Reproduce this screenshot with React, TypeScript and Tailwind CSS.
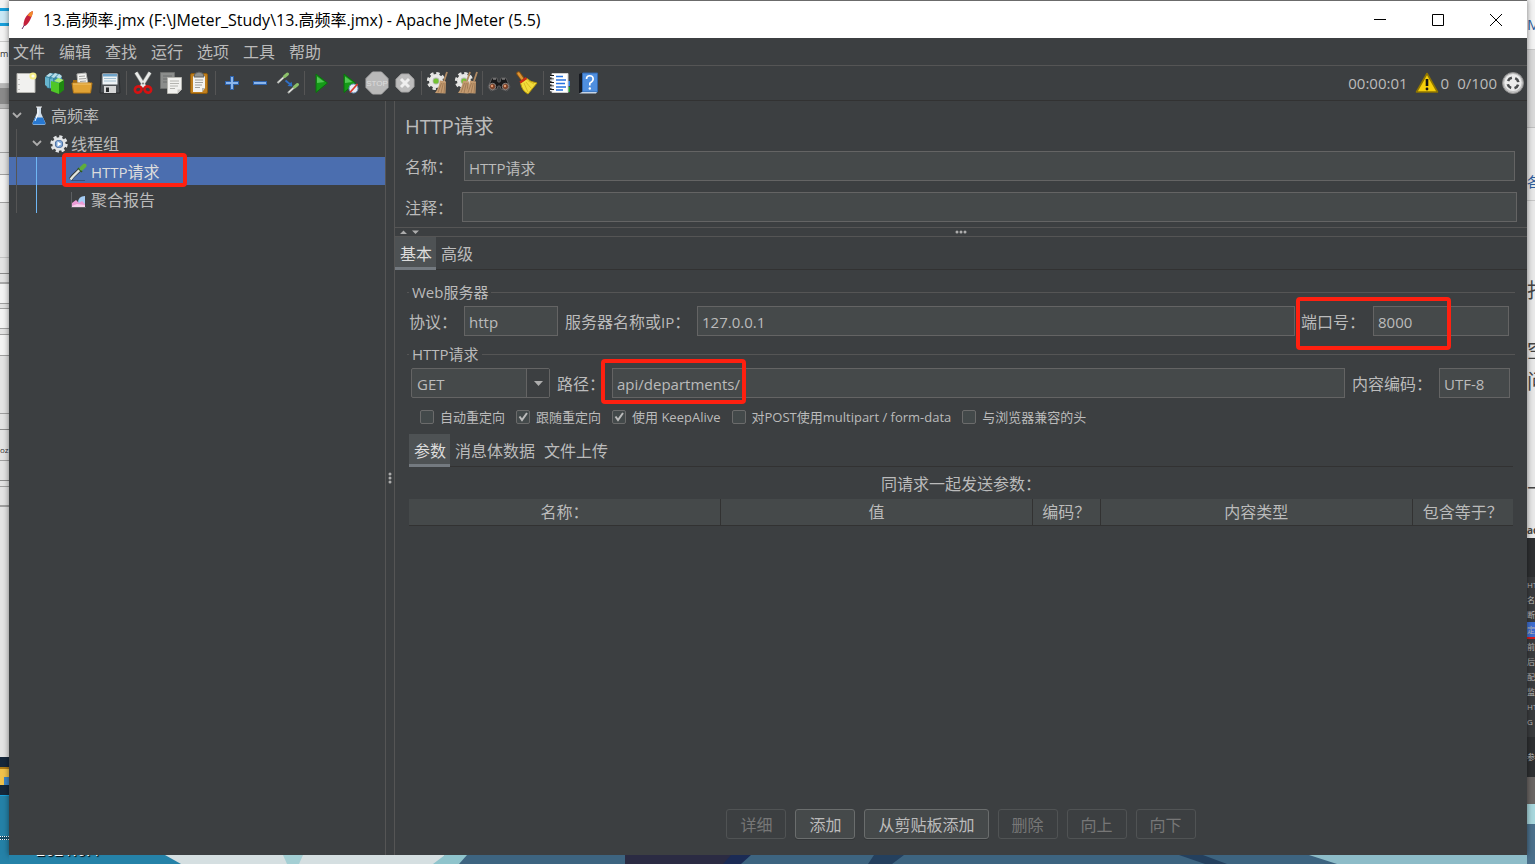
import { useState } from "react";
import type { ReactNode } from "react";

const FIELD =
  "h-[30px] min-w-0 border border-[#646464] bg-[#45494a] px-1 pt-0.5 text-[15px] text-[#bbbbbb] focus:border-[#466d94] focus:outline-none";

const MENUS = ["文件", "编辑", "查找", "运行", "选项", "工具", "帮助"];

/* ---------- toolbar icons, all on a 24x24 grid ---------- */

function Icon({ children, className = "size-6" }: { children: ReactNode; className?: string }) {
  return (
    <svg viewBox="0 0 24 24" className={`${className} shrink-0`} fill="none" aria-hidden="true">
      {children}
    </svg>
  );
}

const Gear = () => (
  <g>
    <circle cx="10" cy="10" r="7.8" stroke="#e4e4e2" strokeWidth="2.6" strokeDasharray="3.4 2.726" />
    <circle cx="10" cy="10" r="7" fill="#e8e8e6" />
    <circle cx="10" cy="10" r="3.4" fill="#b5b8b2" />
    <circle cx="10" cy="10" r="2.6" fill="#73c332" />
  </g>
);

const Brush = ({ x = 0 }: { x?: number }) => (
  <g transform={`translate(${x} 0)`}>
    <path d="M21 1 18 10" stroke="#b08a62" strokeWidth="1.8" />
    <path d="M14 9.5 20 10.5 19.5 22.5 9 22Q13 17 14 9.5Z" fill="#c39a70" />
    <path d="M15.5 12 12 21.5M17.3 12 15 22M19 12 18 22" stroke="#94704a" strokeWidth=".7" />
  </g>
);

const NewIcon = () => (
  <Icon>
    <path d="M3 2.5h18v19H3z" fill="#f1f1ef" stroke="#b5b5b0" />
    <path d="M5 8v1M5 13v1M5 18v1" stroke="#999" />
    <circle cx="19" cy="5" r="3.6" fill="#f7ee86" />
    <circle cx="19" cy="5" r="1.6" fill="#fffef0" />
  </Icon>
);

const TemplatesIcon = () => (
  <Icon>
    <path d="M3 6 8 2l10 1 2 4v5l-8 6-7-1z" fill="#3b89a6" />
    <path d="M4 5 8 2l3 1-4 3zM9 6l4-4 3 1-4 4zM14 6l3-3 3 2-2 3z" fill="#b9dde8" />
    <path d="M3 6 7 7v10l-4-3zM8 8l3-1v9l-3 1z" fill="#67b4cd" />
    <path d="M12 10 16 7l6 2-4 3z" fill="#a9ec72" />
    <path d="M9 10 17 12v11l-8-3z" fill="#4fc727" />
    <path d="M17 12 22 9v10l-5 4z" fill="#1f8a10" />
  </Icon>
);

const OpenIcon = () => (
  <Icon>
    <path d="M3 9h5l2 2h10v9H3z" fill="#a56c12" />
    <path d="M7 3 16 2l2 11-10 1z" fill="#f4f4f2" stroke="#b7b7b4" />
    <path d="M9 5.5 15 5M9 8l7-.5M10 10.5l6-.5" stroke="#a0a09c" />
    <path d="M2 12h20l-1.5 10h-17z" fill="#e1a335" stroke="#b87b18" />
    <path d="M3 13h18" stroke="#f3c66d" />
  </Icon>
);

const SaveIcon = () => (
  <Icon>
    <path d="M3 2h18l1 20H2z" fill="#4c5054" stroke="#292b2d" />
    <path d="M4.5 2.5h15v11h-15z" fill="#eef3f6" />
    <path d="M5 3h14v2.5H5z" fill="#6fa4ca" />
    <path d="M6 7.5h12M6 10h12" stroke="#a2bfd1" />
    <path d="M6 15h12v7H6z" fill="#d5d6d7" />
    <path d="M8 16.5h3V21H8z" fill="#292b2d" />
  </Icon>
);

const CutIcon = () => (
  <Icon>
    <path d="M5 1.5 14 16M19 1.5 10 16" stroke="#8f9290" strokeWidth="4" />
    <path d="M5 1.5 14 16M19 1.5 10 16" stroke="#e9ebe9" strokeWidth="2.6" />
    <circle cx="12" cy="12.5" r="1" fill="#777" />
    <ellipse cx="7.2" cy="18.5" rx="3.4" ry="3" transform="rotate(-25 7.2 18.5)" stroke="#d51212" strokeWidth="2.6" />
    <ellipse cx="16.8" cy="18.5" rx="3.4" ry="3" transform="rotate(25 16.8 18.5)" stroke="#d51212" strokeWidth="2.6" />
  </Icon>
);

const CopyIcon = () => (
  <Icon>
    <path d="M1.5 1.5h14v16h-14z" fill="#8b8d8c" stroke="#6d6f6e" />
    <path d="M4 5h9M4 8h9M4 11h6" stroke="#6d6f6e" />
    <path d="M8.5 6.5h14v12l-4 4h-10z" fill="#f1f1ef" stroke="#b5b5b0" />
    <path d="M11 10h9M11 12.5h9M11 15h8M11 17.5h5" stroke="#b4b4b0" />
    <path d="m18.5 22.5v-4h4z" fill="#c9c9c5" />
  </Icon>
);

const PasteIcon = () => (
  <Icon>
    <rect x="3.5" y="2.5" width="17" height="20" rx="1.5" fill="#c07f1d" stroke="#8d5a0c" />
    <path d="M6 5h12v12l-3 4H6z" fill="#f2f2f0" />
    <path d="M8 2.5Q12-.5 16 2.5L17 6H7z" fill="#8f918f" stroke="#5e605f" />
    <path d="M8 9h8M8 11.5h8M8 14h7M8 16.5h5" stroke="#a0a09c" />
    <path d="m15 21v-4h3z" fill="#b8b8b3" />
  </Icon>
);

const PlusIcon = () => (
  <Icon>
    <path d="M12 5v14M5 12h14" stroke="#2d62ab" strokeWidth="4" />
    <path d="M12 6v12M6 12h12" stroke="#8bb6ec" strokeWidth="2" />
  </Icon>
);

const MinusIcon = () => (
  <Icon>
    <path d="M5 12h14" stroke="#2d62ab" strokeWidth="4" />
    <path d="M6 12h12" stroke="#8bb6ec" strokeWidth="2" />
  </Icon>
);

const ToggleIcon = () => (
  <Icon>
    <path d="M1.5 12 8 6M12 22 18 16.500" stroke="#b4b7b3" strokeWidth="2.2" />
    <path d="M2.5 11 7.500 6.500M13 21l4.500-4" stroke="#f0f2ee" />
    <path d="M8.500 5.500 11.500 3M18.500 16l3-2.500" stroke="#8cc069" strokeWidth="3" strokeLinecap="round" />
    <path d="M9.5 9.5 15 14" stroke="#2f6fc6" strokeWidth="1.8" />
    <path d="m16.5 15.5-5-.6 4-4.2z" fill="#2f6fc6" />
  </Icon>
);

const StartIcon = ({ noTimers = false }: { noTimers?: boolean }) => (
  <Icon>
    <path d="M7 3 18.5 12 7 21.5z" fill="#159a18" stroke="#0b700d" />
    <path d="M8 5.5 15.5 11 8 12z" fill="#52c653" />
    {noTimers && (
      <>
        <circle cx="16.5" cy="17.5" r="4.5" fill="#e8eef5" stroke="#6d94bd" />
        <path d="M13 21.5 20.5 13" stroke="#d83b2d" strokeWidth="1.8" />
      </>
    )}
  </Icon>
);

const StopIcon = () => (
  <Icon>
    <path d="M7.5 1h9L23 7.5v9L16.5 23h-9L1 16.500v-9z" fill="#b9b9b9" stroke="#b0b0b0" />
    <text x="12" y="15" textAnchor="middle" fontSize="8" fontFamily="Liberation Sans, sans-serif" fill="#dddddd">
      STOP
    </text>
  </Icon>
);

const ShutdownIcon = () => (
  <Icon>
    <path d="M8.3 3h7.4L21 8.3v7.4L15.7 21H8.3L3 15.7V8.3z" fill="#bdbdbd" stroke="#a8a8a8" />
    <path d="m8 8 8 8M16 8l-8 8" stroke="#efefef" strokeWidth="3" />
  </Icon>
);

const ClearIcon = () => (
  <Icon>
    <Gear />
    <Brush />
  </Icon>
);

const ClearAllIcon = () => (
  <Icon>
    <Gear />
    <Brush x={-5} />
    <Brush x={2} />
  </Icon>
);

const SearchIcon = () => (
  <Icon>
    <path d="M5 7h5l1 4h2l1-4h5l4 9-3 4-6-2-1-3h-2l-1 3-6 2-3-4z" fill="#19191a" stroke="#5c5c5d" />
    <path d="M6 8h3M15 8h3" stroke="#aaa" />
    <circle cx="5.5" cy="15.5" r="3.2" fill="#7a4027" stroke="#888" />
    <circle cx="18.5" cy="15.5" r="3.2" fill="#7a4027" stroke="#888" />
    <circle cx="5" cy="15" r="1.2" fill="#e29a70" />
    <circle cx="18" cy="15" r="1.2" fill="#e29a70" />
  </Icon>
);

const BroomIcon = () => (
  <Icon>
    <path d="M3.5 2.5 8 8.5" stroke="#8d520f" strokeWidth="4.4" strokeLinecap="round" />
    <path d="M3.5 2.5 7 7.5" stroke="#dc9637" strokeWidth="2.4" strokeLinecap="round" />
    <path d="M5.5 12 12 7.5Q15 11 22 12L13 23Q7 20 5.5 12z" fill="#f3dc3c" stroke="#b79708" />
    <path d="M5 11.5 11.5 7" stroke="#cc2b14" strokeWidth="2.2" />
    <path d="M9 12Q11 17 13 21M11 11Q14 15 16.5 17.5M12.5 9.5 19 13" stroke="#d9bd22" />
  </Icon>
);

const FunctionIcon = () => (
  <Icon>
    <path d="M18 10h4v5h-4z" fill="#2e7fe2" />
    <path d="M18 16h4v5h-4z" fill="#1d9a2b" />
    <path d="M4 2.500h16v19H4z" fill="#fff" stroke="#d0d0d0" />
    <path d="M8 5.500h7M8 9h10M8 12.500h9M8 16h10M8 19h7" stroke="#2672df" strokeWidth="1.3" />
    <path d="M2 4.500h4M2 8h4M2 11.500h4M2 15h4M2 18.500h4" stroke="#151515" strokeWidth="1.2" />
    <path d="M2 5.700h4M2 9.200h4M2 12.700h4M2 16.200h4M2 19.700h4" stroke="#eee" strokeWidth="1.2" />
  </Icon>
);

const HelpIcon = () => (
  <Icon>
    <path d="M3 3 7 1.500v20L3 22.500z" fill="#171a20" />
    <path d="M6.500 2h15v19h-15z" fill="#4f8fdf" stroke="#3367ab" />
    <path d="M3 22.500 6 21h15l-1 1.500z" fill="#c7d5e6" />
    <path d="M10.500 8Q10.500 4.800 13.800 4.800T17.200 8Q17.200 10.300 13.800 12.200V14.500" stroke="#fff" strokeWidth="1.6" />
    <circle cx="13.800" cy="17.500" r="1.200" fill="#fff" />
  </Icon>
);

const WarningIcon = () => (
  <Icon>
    <path d="M12 2.5 22.5 21h-21z" fill="#f6cf0a" stroke="#8f7500" strokeWidth="1.6" strokeLinejoin="round" />
    <path d="M12 8v7" stroke="#141414" strokeWidth="2.6" />
    <circle cx="12" cy="18" r="1.4" fill="#141414" />
  </Icon>
);

const RemoteIcon = () => (
  <Icon>
    <circle cx="12" cy="12" r="10.5" fill="#c2c2c2" stroke="#8d8d8d" />
    <circle cx="12" cy="11.5" r="8.6" fill="#ececec" />
    <circle cx="12" cy="12" r="5.400" stroke="#4a4c4e" strokeWidth="2.600" strokeDasharray="5 3.480" strokeDashoffset="-1.700" />
  </Icon>
);

/* ---------- tree icons ---------- */

const FlaskIcon = () => (
  <svg viewBox="0 0 16 20" className="h-5 w-4 shrink-0" aria-hidden="true">
    <path d="M6 1h4v6l4.5 10q.3 2-1.5 2H3q-1.800 0-1.500-2L6 7z" fill="#cfdce8" />
    <path d="M4 11.500h8l2.300 5.500q.2 1.500-1.300 1.500H3q-1.500 0-1.300-1.500z" fill="#2878d0" />
    <path d="M5 1h6" stroke="#eee" />
    <path d="M7 3v5l-3 7" stroke="#fff" fill="none" />
  </svg>
);

const ThreadGroupIcon = () => (
  <svg viewBox="0 0 18 18" className="size-[18px] shrink-0" fill="none" aria-hidden="true">
    <circle cx="9" cy="9" r="7.400" stroke="#e3e5e7" strokeWidth="2.600" strokeDasharray="3.200 2.612" />
    <circle cx="9" cy="9" r="5.400" fill="#3b5f94" stroke="#e3e5e7" strokeWidth="2.600" />
    <circle cx="9" cy="9" r="3.400" fill="#7fa6d6" />
    <path d="M7.500 6.500 11.500 9l-4 2.500z" fill="#fff" />
  </svg>
);

const SamplerIcon = () => (
  <svg viewBox="0 0 18 18" className="size-[18px] shrink-0" fill="none" aria-hidden="true">
    <path d="M2 17.500h14" stroke="#37517f" />
    <path d="M1.500 16.500 4 13 11 6.500" stroke="#33373a" strokeWidth="3.800" />
    <path d="M1.500 16.500 4 13.500 11 6.500" stroke="#e2e6df" strokeWidth="2.400" />
    <path d="m9 5 4 4" stroke="#315d1a" strokeWidth="1.600" />
    <path d="M12.500 5.500 15.500 2.500" stroke="#5fae3a" strokeWidth="4" strokeLinecap="round" />
  </svg>
);

const ReportIcon = () => (
  <svg viewBox="0 0 18 18" className="size-[18px] shrink-0" fill="none" aria-hidden="true">
    <path d="M2.500 1v15.500H17" stroke="#5d6062" />
    <path d="M9 12q0-7 7-7v8l-7 2z" fill="#a6cdf5" />
    <path d="M3 16v-4l4-3 3 3 3-2 3 3v3z" fill="#eb9bd6" />
    <path d="M3 16v-1l5-2 8 1v2z" fill="#f6d0ec" />
  </svg>
);

const Chevron = () => (
  <svg viewBox="0 0 12 12" className="size-3 shrink-0" fill="none" aria-hidden="true">
    <path d="m2 4 4 4 4-4" stroke="#adadad" strokeWidth="1.800" />
  </svg>
);

/* ---------- small pieces ---------- */

function Tool({ label, children }: { label: string; children: ReactNode }) {
  return (
    <button type="button" aria-label={label} className="flex w-7 items-center justify-center">
      {children}
    </button>
  );
}

const Sep = () => (
  <div className="flex w-[5px] justify-center">
    <div className="h-6 w-px bg-[#555555]" />
  </div>
);

const RedBox = ({ className }: { className: string }) => (
  <div className={`pointer-events-none absolute rounded border-4 border-[#ff2010] ${className}`} />
);

function Tabs({ items }: { items: string[] }) {
  const [active, setActive] = useState(items[0]);
  return (
    <div role="tablist" className="flex h-[33px] border-b border-[#323232]">
      {items.map((t) => (
        <button
          key={t}
          type="button"
          role="tab"
          aria-selected={t === active}
          onClick={() => setActive(t)}
          className={`h-[33px] border-b-3 pl-[5px] pr-1 pt-1 text-base ${
            t === active ? "border-[#747a80] bg-[#4e5254] text-[#dddddd]" : "border-transparent"
          }`}
        >
          {t}
        </button>
      ))}
    </div>
  );
}

function Check({ label, checked = false }: { label: string; checked?: boolean }) {
  return (
    <label className="flex items-center gap-1.5">
      <span className="relative flex size-3.5">
        <input
          type="checkbox"
          defaultChecked={checked}
          className="peer size-3.5 appearance-none rounded-[2px] border border-[#6b6b6b] bg-[#43494a]"
        />
        <svg
          viewBox="0 0 14 14"
          fill="none"
          aria-hidden="true"
          className="pointer-events-none absolute inset-0 hidden size-3.5 peer-checked:block"
        >
          <path d="m3.500 6.500 2.500 3.500L11 3" stroke="#bbbbbb" strokeWidth="2" />
        </svg>
      </span>
      {label}
    </label>
  );
}

function ActionButton({ children, disabled = false }: { children: ReactNode; disabled?: boolean }) {
  return (
    <button
      type="button"
      disabled={disabled}
      className="h-[30px] rounded-[3px] border border-[#6a6d6d] bg-[#45494a] px-[13px] pt-0.5 text-base shadow-[0_1px_0_#333638] disabled:border-[#505354] disabled:bg-transparent disabled:text-[#777777] disabled:shadow-none"
    >
      {children}
    </button>
  );
}

/* ---------- what shows of the desktop around the window ---------- */

function LeftEdge() {
  return (
    <div className="flex w-[9px] shrink-0 flex-col overflow-hidden bg-[#e4e4e4] text-[9px] leading-4 text-[#333333]" aria-hidden="true">
      <div className="h-2 bg-[#f4f4f4]" />
      <div className="h-[18px] border-y-3 border-[#18a0dc] bg-[#c9e9f6]" />
      <div className="h-4 border-b border-[#c8c8c8] bg-[#f4f4f4]" />
      <div className="h-[42px] border-b border-[#c0c0c0] bg-[#f4f4f4] pt-1">m</div>
      <div className="h-6 border-y-4 border-[#b8b8b8] bg-[#8b8b8b]" />
      <div className="h-[45px] border-y border-[#a0a0a0]" />
      <div className="h-[22px] border-b border-[#a0a0a0]" />
      <div className="h-[28px] border-b border-[#a0a0a0] bg-[#f4f4f4]" />
      <div className="h-[55px] border-b border-[#c4c4c4]" />
      <div className="h-4 border-b border-[#8c8c8c]" />
      <div className="h-[10px] border-b-2 border-[#aaaaaa]" />
      <div className="h-5 border-b border-[#a0a0a0] bg-[#f4f4f4]" />
      <div className="h-[5px] border-b border-[#a0a0a0]" />
      <div className="h-5 border-b border-[#a0a0a0] bg-[#f4f4f4]" />
      <div className="h-[6px] border-b border-[#a0a0a0]" />
      <div className="h-[21px] border-b border-[#a0a0a0] bg-[#f4f4f4]" />
      <div className="h-[58px] border-b border-[#a0a0a0]" />
      <div className="h-4 border-b border-[#8c8c8c]" />
      <div className="h-[31px] border-b border-[#a0a0a0] pt-3 text-[8px]">oz</div>
      <div className="h-5 border-b border-[#8c8c8c]" />
      <div className="h-[6px] border-b border-[#a0a0a0]" />
      <div className="h-5 border-b-2 border-[#a0a0a0]" />
      <div className="flex-1" />
      <div className="h-[10px] bg-[#17283b]" />
      <div className="flex h-[18px] items-end justify-end border-t-2 border-[#b07c15] bg-[#f2c34c]">
        <div className="h-2 w-[5px] bg-[#3d84c4]" />
      </div>
      <div className="h-[11px] border-b border-[#18a0dc] bg-[#17283b]" />
      <div className="h-10 bg-[#2582a8]" />
      <div className="h-1 border-y border-dotted border-white bg-[#17506b]" />
      <div className="h-6 bg-[#2582a8]" />
    </div>
  );
}

function RightEdge() {
  return (
    <div className="flex w-2 shrink-0 flex-col overflow-hidden whitespace-nowrap bg-[#e9e9e9] text-[20px] leading-6 text-[#444444]" aria-hidden="true">
      <div className="h-[50px] border-b border-[#c8c8c8] bg-[#f4f4f4] pt-3 text-[15px] text-[#2f5f9e]">M</div>
      <div className="h-[78px] border-b border-[#c0c0c0] bg-[#dadada]" />
      <div className="h-[73px] border-b border-[#c8c8c8] pt-[42px] text-[14px] text-[#2f5f9e]">各</div>
      <div className="h-[78px]" />
      <div className="h-[60px]">打</div>
      <div className="h-[31px]">空</div>
      <div className="h-[114px]">问</div>
      <div className="h-[34px]">下</div>
      <div className="h-5 text-[10px] font-bold">ac</div>
      <div className="h-[39px] bg-[#2e3032]" />
      <div className="flex h-[160px] flex-col bg-[#3a3c3e] text-[8px] leading-[15px] text-[#bbbbbb]">
        <span>HT</span>
        <span>名</span>
        <span>断</span>
        <span className="border-b-2 border-[#d81e1e] bg-[#3f6fd0]">定</span>
        <span>前</span>
        <span>后</span>
        <span>配</span>
        <span>监</span>
        <span>HT</span>
        <span>G</span>
      </div>
      <div className="h-10 bg-[#2e3032] pt-3 text-[8px] leading-[15px] text-[#bbbbbb]">参</div>
      <div className="h-[27px] bg-[#6b6664]" />
      <div className="h-5 bg-[#a9d8de]" />
      <div className="flex-1 bg-[#4b708c]" />
    </div>
  );
}

function BottomEdge() {
  return (
    <div className="relative h-[9px] shrink-0 overflow-hidden bg-[#3d6480]" aria-hidden="true">
      <svg viewBox="0 0 1518 9" preserveAspectRatio="none" className="h-full w-full">
        <path d="M0 0h160l14 9H0z" fill="#2582a8" />
        <path d="M156 0h280l-6 9H172z" fill="#d5dfe1" />
        <path d="M274 0h20l-4 9h-12z" fill="#a4cfd4" />
        <path d="M436 0h22l-8 9h-26z" fill="#8fc4cc" />
        <path d="M616 0h120l-14 9H616z" fill="#2b2b43" />
        <path d="M722 0h20l-10 9h-18z" fill="#1b2b55" />
        <path d="M865 0h30l-12 9h-24zM1170 0h24l24 9h-22z" fill="#24405e" />
        <path d="M1300 0h218v9h-190z" fill="#8dbcc8" />
      </svg>
      <span className="absolute bottom-1 left-[27px] text-base leading-5 text-white [text-shadow:1px_1px_1px_#000]">2021.0.4</span>
    </div>
  );
}

/* ---------- main ---------- */

function TitleBar() {
  return (
    <header className="flex h-[38px] shrink-0 items-center border-t border-[#6b6b6b] bg-white pl-2.5 pr-0.5 text-black">
      <svg viewBox="0 0 16 22" className="h-[22px] w-4 shrink-0" fill="none" aria-hidden="true">
        <path d="M13.500 2Q14.500 3 12 9T6 17L4.500 16.500Q4.500 11 7.500 7T13.500 2z" fill="#c4203c" />
        <path d="M13.500 2Q14.500 3 12.500 8L8.500 6.500Q10.500 3 13.500 2z" fill="#f28a2c" />
        <path d="M5.500 16 3 20" stroke="#6b2a68" />
      </svg>
      <h1 className="flex-1 pl-2 text-base">13.高频率.jmx (F:\JMeter_Study\13.高频率.jmx) - Apache JMeter (5.5)</h1>
      <button type="button" aria-label="最小化" className="flex w-[58px] justify-center">
        <svg viewBox="0 0 12 12" className="size-3" aria-hidden="true">
          <path d="M0 5.500h12" stroke="#000" />
        </svg>
      </button>
      <button type="button" aria-label="最大化" className="flex w-[58px] justify-center">
        <svg viewBox="0 0 12 12" className="size-3" aria-hidden="true">
          <path d="M.5.5h11v11H.5z" fill="none" stroke="#000" />
        </svg>
      </button>
      <button type="button" aria-label="关闭" className="flex w-[58px] justify-center">
        <svg viewBox="0 0 12 12" className="size-3" aria-hidden="true">
          <path d="m0 0 12 12M12 0 0 12" stroke="#000" />
        </svg>
      </button>
    </header>
  );
}

function Toolbar() {
  return (
    <div role="toolbar" className="flex h-[35px] shrink-0 items-center border-b border-[#323232] pl-[3px] pr-0.5">
      <Tool label="新建"><NewIcon /></Tool>
      <Tool label="模板"><TemplatesIcon /></Tool>
      <Tool label="打开"><OpenIcon /></Tool>
      <Tool label="保存"><SaveIcon /></Tool>
      <Sep />
      <Tool label="剪切"><CutIcon /></Tool>
      <Tool label="复制"><CopyIcon /></Tool>
      <Tool label="粘贴"><PasteIcon /></Tool>
      <Sep />
      <Tool label="展开"><PlusIcon /></Tool>
      <Tool label="收起"><MinusIcon /></Tool>
      <Tool label="切换"><ToggleIcon /></Tool>
      <Sep />
      <Tool label="启动"><StartIcon /></Tool>
      <Tool label="不停顿开始"><StartIcon noTimers /></Tool>
      <Tool label="停止"><StopIcon /></Tool>
      <Tool label="关闭"><ShutdownIcon /></Tool>
      <Sep />
      <Tool label="清除"><ClearIcon /></Tool>
      <Tool label="清除全部"><ClearAllIcon /></Tool>
      <Sep />
      <Tool label="查找"><SearchIcon /></Tool>
      <Tool label="重置查找"><BroomIcon /></Tool>
      <Sep />
      <Tool label="函数助手"><FunctionIcon /></Tool>
      <Tool label="帮助"><HelpIcon /></Tool>
      <div className="ml-auto flex items-center text-[15px]">
        <span className="pr-[7px]">00:00:01</span>
        <WarningIcon />
        <span className="pl-0.5 pr-2">0</span>
        <span className="pr-1">0/100</span>
        <RemoteIcon />
      </div>
    </div>
  );
}

function Tree() {
  return (
    <nav className="w-[376px] shrink-0">
      <ul role="tree" className="text-base">
        <li role="treeitem" className="flex h-7 items-center pl-0.5">
          <Chevron />
          <span className="flex items-center gap-1 pl-2 pt-0.5">
            <FlaskIcon />
            高频率
          </span>
        </li>
        <li role="treeitem" className="flex h-7 items-center pl-[7px]">
          <span className="h-full w-[15px] border-l border-[#555555]" />
          <Chevron />
          <span className="flex items-center gap-[3px] pl-[7px] pt-0.5">
            <ThreadGroupIcon />
            线程组
          </span>
        </li>
        <li role="treeitem" aria-selected="true" className="relative flex h-7 items-center bg-[#4b6eaf] pl-[7px]">
          <span className="h-full w-5 border-l border-[#555555]" />
          <span className="h-full w-[33px] border-l border-[#6fb7f5]" />
          <span className="flex items-center gap-1 pt-0.5">
            <SamplerIcon />
            <span className="text-[#dddddd]">
              <span className="text-[15px]">HTTP</span>请求
            </span>
          </span>
          <RedBox className="-top-1 left-[53px] h-[34px] w-[125px]" />
        </li>
        <li role="treeitem" className="flex h-7 items-center pl-[7px]">
          <span className="h-full w-5 border-l border-[#555555]" />
          <span className="h-full w-[33px] border-l border-[#6fb7f5]" />
          <span className="flex items-center gap-1 pt-0.5">
            <ReportIcon />
            聚合报告
          </span>
        </li>
      </ul>
    </nav>
  );
}

function HttpRequestPanel() {
  return (
    <main className="flex min-w-0 flex-1 flex-col">
      <h2 className="pl-2.5 pt-3 text-[20px] leading-7">HTTP请求</h2>
      <div className="mt-2.5 flex items-center pl-2.5 pr-3">
        <label htmlFor="name" className="w-[59px] pt-0.5 text-base">名称：</label>
        <input id="name" defaultValue="HTTP请求" className={`${FIELD} flex-1`} />
      </div>
      <div className="mt-[11px] flex items-center pl-2.5 pr-2.5">
        <label htmlFor="comment" className="w-[57px] pt-0.5 text-base">注释：</label>
        <input id="comment" className={`${FIELD} flex-1`} />
      </div>

      <div className="mt-[5px] grid h-[10px] shrink-0 grid-cols-3 items-center border-y border-[#555555]">
        <svg viewBox="0 0 20 6" className="ml-[5px] h-1.5 w-5" fill="#adadad" aria-hidden="true">
          <path d="M0 5h7L3.500 1.500zM12 1.500h7L15.500 5z" />
        </svg>
        <svg viewBox="0 0 12 4" className="h-1 w-3 justify-self-center" fill="#adadad" aria-hidden="true">
          <circle cx="2" cy="2" r="1.500" />
          <circle cx="6" cy="2" r="1.500" />
          <circle cx="10" cy="2" r="1.500" />
        </svg>
      </div>

      <Tabs items={["基本", "高级"]} />

      <fieldset className="mt-3 ml-3 mr-3 border-t border-[#555555]">
        <legend className="ml-0.5 px-[3px] text-[15px] leading-5">Web服务器</legend>
        <div className="flex items-center pl-0.5 pr-1.5 pt-1 text-base">
          <label htmlFor="protocol" className="w-[55px] pt-0.5">协议：</label>
          <input id="protocol" defaultValue="http" className={`${FIELD} w-[94px]`} />
          <label htmlFor="server" className="w-[139px] whitespace-nowrap pl-[7px] pt-0.5">
            服务器名称或<span className="text-[15px]">IP</span>：
          </label>
          <input id="server" defaultValue="127.0.0.1" className={`${FIELD} flex-1`} />
          <div className="relative ml-1.5 flex items-center">
            <label htmlFor="port" className="w-[72px] pt-0.5">端口号：</label>
            <input id="port" defaultValue="8000" className={`${FIELD} w-[136px]`} />
            <RedBox className="-left-[5px] -top-[9px] h-[53px] w-[155px]" />
          </div>
        </div>
      </fieldset>

      <fieldset className="mt-2 ml-3 mr-3 border-t border-[#555555]">
        <legend className="ml-0.5 px-[3px] text-[15px] leading-5">HTTP请求</legend>
        <div className="flex items-center pl-1 pr-[5px] pt-1 text-base">
          <div className="relative">
            <select
              aria-label="方法"
              defaultValue="GET"
              className="h-[30px] w-[139px] appearance-none rounded-[2px] border border-[#646464] bg-[#45494a] px-[5px] pt-0.5 text-[15px]"
            >
              <option>GET</option>
              <option>POST</option>
              <option>PUT</option>
              <option>DELETE</option>
            </select>
            <span className="pointer-events-none absolute inset-y-px right-px flex w-[23px] items-center justify-center border-l border-[#646464] bg-[#3c3f41]">
              <svg viewBox="0 0 9 5" className="h-[5px] w-[9px]" fill="#adadad" aria-hidden="true">
                <path d="M0 0h9L4.500 5z" />
              </svg>
            </span>
          </div>
          <div className="relative flex flex-1 items-center pl-[7px]">
            <label htmlFor="path" className="w-[55px] pt-0.5">路径：</label>
            <input id="path" defaultValue="api/departments/" className={`${FIELD} flex-1`} />
            <RedBox className="-top-[9px] left-[51px] h-[45px] w-[145px]" />
          </div>
          <label htmlFor="encoding" className="w-[94px] pl-[7px] pt-0.5">内容编码：</label>
          <input id="encoding" defaultValue="UTF-8" className={`${FIELD} w-[71px]`} />
        </div>
        <div className="flex items-center gap-[11px] pl-[13px] pt-[9px] text-[13px] leading-5">
          <Check label="自动重定向" />
          <Check label="跟随重定向" checked />
          <Check label="使用 KeepAlive" checked />
          <Check label="对POST使用multipart / form-data" />
          <Check label="与浏览器兼容的头" />
        </div>
      </fieldset>

      <section className="mx-3.5 mt-[7px] flex flex-1 flex-col">
        <Tabs items={["参数", "消息体数据", "文件上传"]} />
        <table className="mt-[5px] w-full table-fixed text-base">
          <caption className="pb-[3px] leading-6">同请求一起发送参数：</caption>
          <colgroup>
            <col />
            <col />
            <col className="w-[68px]" />
            <col />
            <col className="w-[101px]" />
          </colgroup>
          <thead>
            <tr className="h-[26px] border-b border-[#323232] bg-[#45494a]">
              {["名称：", "值", "编码？", "内容类型", "包含等于？"].map((h) => (
                <th key={h} className="whitespace-nowrap border-r border-[#323232] pt-0.5 font-normal leading-[23px] last:border-r-0">
                  {h}
                </th>
              ))}
            </tr>
          </thead>
        </table>
        <div className="mt-auto flex justify-center gap-[9px] pb-4">
          <ActionButton disabled>详细</ActionButton>
          <ActionButton>添加</ActionButton>
          <ActionButton>从剪贴板添加</ActionButton>
          <ActionButton disabled>删除</ActionButton>
          <ActionButton disabled>向上</ActionButton>
          <ActionButton disabled>向下</ActionButton>
        </div>
      </section>
    </main>
  );
}

export default function App() {
  return (
    <div className="flex h-screen overflow-hidden font-['Open_Sans','Noto_Sans_CJK_SC',sans-serif]">
      <LeftEdge />
      <div className="flex min-w-0 flex-1 flex-col">
        <div className="relative flex min-h-0 flex-1 flex-col bg-[#3c3f41] text-[#bbbbbb] shadow-[0_0_6px_rgba(0,0,0,0.5)]">
          <TitleBar />
          <div role="menubar" className="flex h-7 shrink-0 items-center gap-3.5 border-b border-[#555555] pl-1 text-base">
            {MENUS.map((m) => (
              <button key={m} type="button" role="menuitem">
                {m}
              </button>
            ))}
          </div>
          <Toolbar />
          <div className="flex min-h-0 flex-1">
            <Tree />
            <div className="flex w-[10px] shrink-0 items-center justify-center border-x border-[#555555]">
              <svg viewBox="0 0 4 12" className="h-3 w-1" fill="#adadad" aria-hidden="true">
                <circle cx="2" cy="2" r="1.500" />
                <circle cx="2" cy="6" r="1.500" />
                <circle cx="2" cy="10" r="1.500" />
              </svg>
            </div>
            <HttpRequestPanel />
          </div>
        </div>
        <BottomEdge />
      </div>
      <RightEdge />
    </div>
  );
}
